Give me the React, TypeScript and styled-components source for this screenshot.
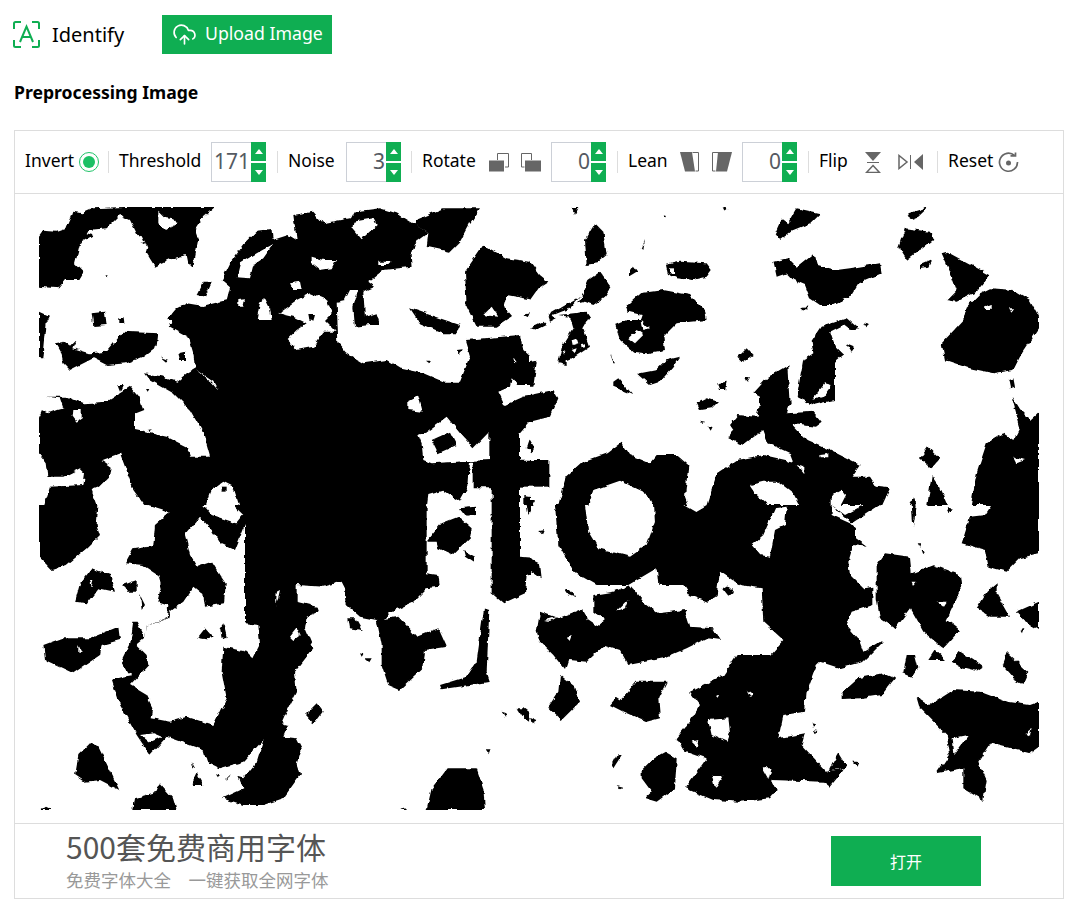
import styled, { createGlobalStyle } from "styled-components";
import { CloudUpload } from "lucide-react";

const GREEN = "#0fae52";
const ICON = "#666";

// the thresholded picture, traced per quadrant in 3x crop coordinates
type Quadrant = {
  x: number;
  y: number;
  black: string[];
  white: string[];
  top: string[];
};

const quadrants: Quadrant[] = [
  {
    x: 30,
    y: 200,
    black: [
      "27,110 40,92 80,95 110,85 125,50 130,35 155,40 190,25 280,21 555,21 520,50 495,90 505,120 495,170 490,205 475,190 470,165 430,175 375,200 350,160 355,140 330,125 320,100 300,60 270,45 250,65 230,85 175,90 170,100 190,105 150,130 135,190 160,215 145,240 105,240 85,265 27,260",
      "415,355 440,325 470,310 520,318 590,300 600,262 575,240 600,190 640,135 680,95 725,90 728,120 775,105 800,120 790,45 850,35 880,70 960,55 970,35 1050,25 1100,40 1150,70 1195,100 1155,130 1145,165 1148,200 1060,210 1015,245 1035,260 1000,275 1005,350 1040,340 1050,375 1020,375 975,380 970,320 985,270 960,270 945,300 920,305 925,430 950,460 1000,490 1070,480 1110,505 1180,520 1240,545 1290,545 1320,470 1305,420 1470,405 1480,450 1525,490 1515,545 1560,570 1560,925 350,925 310,870 285,800 270,760 215,780 245,800 240,830 210,860 185,870 205,925 40,925 60,860 160,855 165,820 150,805 100,830 55,830 50,790 27,760 27,650 40,620 50,590 110,590 160,610 230,605 300,560 325,590 340,630 315,640 315,690 410,710 470,740 480,770 540,770 520,700 480,630 430,580 360,540 345,520 400,530 440,545 470,520 495,505 490,460 475,410 420,380",
      "1155,60 1240,25 1350,25 1320,70 1290,125 1260,155 1190,140 1195,100 1155,75",
      "1305,215 1360,135 1430,175 1500,185 1560,245 1520,270 1510,300 1430,285 1420,320 1445,350 1400,380 1340,380 1310,320",
      "1140,325 1200,345 1290,375 1280,400 1240,400 1170,370",
      "500,285 520,245 545,245 525,290",
      "27,335 60,350 50,370 45,420 40,475 27,475",
      "185,340 225,335 230,375 190,378",
      "268,355 278,352 280,372 268,372",
      "75,430 100,425 120,440 140,420 130,445 180,460 230,455 280,395 385,400 380,440 340,470 290,490 230,495 190,475 120,510 100,490 95,465",
      "390,470 415,480 410,487",
      "445,460 465,455 465,480 450,480",
      "262,555 280,555 270,575",
      "345,570 355,570 350,578",
      "1480,345 1500,340 1495,352",
      "1500,385 1550,365 1530,390",
      "1280,450 1298,448 1290,465",
      "1185,482 1200,482 1195,490",
      "226,226 236,226 232,232",
    ],
    white: [
      "385,35 400,50 430,55 440,70 405,90 385,70",
      "320,115 335,108 345,130 325,125",
      "620,232 630,190 680,160 730,132 700,175 670,195 660,235",
      "845,170 880,180 918,180 905,205 870,210 845,190",
      "970,65 1030,55 1040,75 995,118 968,85",
      "780,250 810,245 815,270 790,270",
      "690,305 705,295 720,325 725,360 680,360",
      "625,300 645,298 640,320 625,320",
      "745,340 800,300 840,280 890,300 905,340 885,360 920,395 880,395 850,440 800,450 770,420 800,390 830,370 790,350",
      "1045,185 1085,185 1075,195 1045,195",
      "1135,600 1165,585 1178,635 1135,630",
      "1165,705 1190,695 1250,650 1290,700 1330,745 1378,695 1378,780 1330,782 1205,790 1180,780 1175,730",
      "1320,785 1328,785 1328,862 1385,862 1385,925 1190,925 1195,885 1240,872 1290,905 1315,860",
      "1470,700 1500,665 1560,660 1560,782 1470,782",
      "1470,860 1560,860 1560,925 1470,925",
      "1405,575 1440,560 1445,535 1465,555 1510,555 1560,568 1560,578 1480,590 1425,615",
      "525,925 545,870 580,845 610,860 630,925",
      "495,508 550,545 565,572 545,548",
      "35,605 50,590 90,595 100,625 80,630 55,640 35,630",
      "130,630 155,630 155,655 140,665 128,650",
      "1360,345 1385,320 1405,350",
      "1450,475 1460,490 1452,488",
      "415,360 428,360 425,372 417,372",
    ],
    top: [
      "835,345 855,345 850,362 838,362",
      "1205,720 1260,695 1280,735 1225,760",
      "1490,745 1500,715 1520,730 1510,750",
      "1480,885 1510,890 1500,920 1480,920",
      "575,860 590,860 590,875 575,875",
      "722,145 738,138 735,155 722,160",
      "352,690 365,688 360,696",
    ],
  },
  {
    x: 530,
    y: 200,
    black: [
      "0,185 30,225 55,245 25,265 0,300",
      "195,70 220,95 230,165 200,190 170,195 165,120",
      "125,21 145,21 135,45",
      "335,145 345,120 340,150",
      "300,210 310,195 325,215 300,230",
      "398,45 408,48 404,55",
      "578,21 595,28 585,36",
      "405,195 450,185 530,190 545,210 530,230 490,240 440,235 410,220",
      "145,310 175,240 210,215 245,260 225,290 190,315 165,305",
      "150,290 120,325 70,345 55,345",
      "0,385 40,365 50,375 20,390",
      "55,350 70,345 80,355 60,365",
      "85,345 170,335 180,350 160,385 180,440 135,470 110,480 110,495 85,490 95,440 130,385 120,350",
      "290,315 330,280 400,270 480,285 525,330 530,360 440,370 400,410 405,450 350,460 310,455 270,420 255,375 290,360 330,360 335,345 295,335",
      "240,465 255,490 250,490",
      "330,520 380,510 410,480 450,470 430,500 390,545 360,555 325,525",
      "250,545 265,535 310,585 250,560",
      "0,490 20,485 10,560 0,560",
      "0,585 70,570 85,595 60,650 0,665",
      "625,470 650,445 668,465 640,485",
      "565,550 590,545 585,570 570,570",
      "645,530 660,532 652,545",
      "500,610 530,595 565,605 545,625 510,630",
      "735,100 755,55 775,70 800,25 870,40 840,70 790,90 750,120",
      "730,185 775,175 800,200 850,160 860,195 920,210 960,205 1050,190 1055,220 985,250 960,290 910,315 870,315 840,295 825,255 790,240 770,220 740,230",
      "815,320 835,320 835,328 815,328",
      "1135,40 1195,21 1165,50 1140,60",
      "1125,85 1200,95 1210,120 1130,180 1105,140",
      "1170,195 1205,180 1195,200 1170,205",
      "1235,160 1250,155 1380,225 1340,275 1280,305 1250,300 1280,270 1260,215",
      "1310,320 1350,280 1380,265 1450,270 1500,300 1527,350 1527,385 1470,470 1450,510 1390,520 1320,505 1245,480 1235,430 1300,360",
      "1435,540 1450,535 1455,560 1440,565",
      "1000,370 1020,375 1010,385",
      "875,380 950,355 985,385 960,390 940,375 900,395 915,440 940,465 915,485 915,600 850,615 800,590 820,480 850,460 845,425",
      "950,430 975,440 965,455",
      "595,715 610,690 600,675 625,645 680,650 690,590 670,580 715,530 775,495 782,610 770,640 850,635 875,665 855,680 785,672 830,720 900,750 990,795 965,830 1020,830 1040,860 1080,865 1050,930 525,930 560,820 620,780 700,765 790,785 780,760 715,730 700,690 640,735",
      "80,930 110,830 160,785 230,760 275,725 300,765 360,790 380,765 440,765 475,795 465,890 480,930",
      "0,780 58,780 58,860 0,860",
      "0,715 15,740 5,760 0,755",
      "0,900 15,900 0,925",
      "1320,930 1340,820 1370,730 1420,700 1450,720 1470,680 1445,590 1470,630 1500,660 1527,635 1527,930",
      "1170,775 1195,740 1230,775 1205,805",
      "1190,930 1205,825 1230,860 1260,930",
      "1135,930 1150,885 1165,930",
      "510,665 525,668 518,675",
      "535,680 548,680 542,692",
    ],
    white: [
      "170,930 190,870 270,842 350,880 375,930",
      "660,855 700,845 745,845 790,880 815,930 730,930 680,885",
      "800,795 820,800 820,820",
      "870,765 895,762 895,772 872,772",
      "905,885 935,868 948,885 925,930 905,930",
      "845,600 885,550 905,555 880,590",
      "295,415 320,390 340,405 315,430",
      "335,360 360,385 340,390",
      "420,205 432,205 432,220 420,220",
      "125,420 140,415 145,430 128,435",
      "150,432 165,430 165,442 152,445",
      "125,450 140,445 135,460",
      "95,455 108,450 100,465",
      "1360,320 1385,310 1385,330 1370,330",
      "1450,770 1485,780 1460,790",
      "1440,325 1452,325 1448,335",
    ],
    top: [],
  },
  {
    x: 30,
    y: 505,
    black: [
      "27,0 205,0 200,60 210,90 170,130 110,180 65,195 27,155",
      "355,0 420,20 375,60 370,120 310,130 285,175 340,180 385,210 395,250 385,290 415,300 410,340 350,365 345,400 320,350 310,350 300,420 275,470 295,505 310,510 280,515 245,525 270,600 320,690 360,750 410,695 520,735 530,770 570,790 640,770 700,705 680,770 640,820 625,815 640,850 575,880 640,900 700,900 760,880 810,810 800,780 815,730 800,700 760,695 775,660 755,655 775,610 800,560 795,500 850,430 825,370 830,335 865,320 860,305 800,290 800,240 880,245 935,230 945,250 950,300 990,335 1040,345 1060,345 1080,320 1150,290 1190,250 1230,245 1225,210 1190,205 1190,0",
      "135,290 150,235 185,190 240,210 255,260 205,250 170,295",
      "280,240 320,225 320,260 290,260",
      "330,270 345,300 335,315",
      "40,420 95,400 180,400 265,365 270,405 215,420 210,450 130,505 45,465",
      "135,810 145,750 180,715 205,725 268,855 210,825 165,830",
      "310,915 315,880 380,860 390,835 430,880 440,915",
      "30,915 45,905 65,915",
      "1190,915 1205,850 1250,790 1340,790 1360,850 1365,915",
      "1385,0 1470,0 1470,155 1530,160 1535,190 1490,210 1485,265 1420,295 1385,265",
      "1190,110 1235,55 1285,35 1325,70 1320,100 1270,150 1225,130 1220,110",
      "1290,10 1335,5 1335,30 1310,35",
      "1300,135 1335,155 1335,175 1305,155",
      "1040,345 1105,335 1160,395 1225,370 1250,425 1185,435 1180,490 1110,555 1075,540 1055,480 1055,420",
      "955,340 975,340 995,375 960,370",
      "1230,540 1310,515 1340,470 1362,310 1378,315 1370,500 1380,530 1320,540 1235,553",
      "1415,620 1430,625 1425,635",
      "1460,610 1480,610 1520,640 1505,655 1480,640",
      "825,630 860,595 878,620 850,658",
      "1005,460 1025,460 1018,472",
      "990,445 1000,448 995,455",
      "1370,730 1385,730 1380,745",
      "1525,320 1560,315 1560,450 1520,380",
      "1525,78 1540,75 1535,88",
      "1490,0 1510,0 1495,30",
      "1110,915 1130,910 1132,915",
    ],
    white: [
      "465,90 510,35 545,75 570,115 615,135 645,60 645,355 685,360 690,420 670,460 650,440 580,425 575,500 590,580 550,660 470,635 420,650 365,640 370,610 350,570 300,540 355,480 350,450 320,420 345,400 350,365 415,340 420,320 460,290 490,245 520,270 525,305 585,295 590,240 570,210 545,170 500,185 480,150",
      "740,260 750,255 738,305",
      "780,395 800,370 810,390 790,405",
      "330,690 370,685 395,695 360,712",
      "180,225 190,225 185,245",
      "145,420 155,440 145,440",
      "520,0 610,0 640,30 620,55 545,30",
    ],
    top: [
      "505,395 525,370 548,395 530,400",
      "570,370 580,355 590,395 575,400",
      "485,770 495,790 490,790",
      "485,835 500,805 520,840 490,840",
      "555,805 570,810 560,820",
      "590,820 600,810 590,825",
    ],
  },
  {
    x: 530,
    y: 505,
    black: [
      "75,0 85,120 130,200 200,240 295,240 380,190 385,240 460,240 480,270 530,290 560,270 570,200 630,240 695,250 700,350 760,405 720,450 620,450 580,510 480,560 510,600 480,650 440,700 460,735 530,760 490,815 465,850 550,885 630,890 720,880 740,855 725,825 880,830 900,845 945,790 890,800 815,720 825,685 745,700 760,630 825,620 830,560 860,480 870,470 930,490 1000,470 1060,410 1060,405 1000,440 985,400 950,360 965,320 1030,300 1030,245 1000,250 960,210 955,170 970,120 1010,125 975,100 975,70 960,55 905,30 905,0",
      "300,240 340,290 385,325 465,315 480,365 550,370 570,405 530,400 470,430 400,460 295,480 270,435 225,420 170,470 115,465 105,495 70,450 30,410 20,380 30,320 85,340 160,310 170,345 200,365 225,345 190,320 190,270 250,260",
      "0,160 30,175 35,220 0,195",
      "105,255 120,255 140,280 115,270",
      "90,510 135,545 150,590 95,645 55,605 85,560",
      "0,635 22,645 5,655",
      "240,600 260,575 275,585 320,530 410,530 385,580 390,640 350,650 280,620",
      "1040,180 1065,145 1140,155 1145,205 1210,180 1290,210 1295,250 1250,345 1290,375 1240,430 1180,380 1140,310 1095,370 1050,340 1040,280",
      "935,565 985,520 1060,505 1095,520 1055,570 990,580 935,582",
      "1120,505 1130,450 1155,450 1165,490 1145,515",
      "1195,465 1215,435 1248,465",
      "1265,470 1285,438 1330,465 1358,485 1340,497 1290,485",
      "1415,480 1430,440 1495,500 1480,535 1450,520",
      "1340,310 1370,260 1400,235 1400,265 1440,335 1380,335",
      "1460,320 1527,290 1527,375 1480,345",
      "1160,575 1200,600 1270,555 1350,560 1430,590 1500,600 1527,590 1527,725 1500,745 1380,715 1345,770 1370,825 1360,885 1300,850 1300,790 1220,805 1260,745 1250,690 1170,610",
      "1300,100 1320,35 1365,30 1385,0 1527,0 1527,145 1470,160 1430,200 1375,185 1365,135 1295,115",
      "1145,0 1160,0 1150,65",
      "245,780 260,750 275,750 250,790",
      "260,840 280,845 270,850",
      "335,795 370,760 405,740 440,760 435,850 380,890 345,880 365,860 335,820",
      "910,770 925,745 950,785 895,800",
      "970,770 985,770 980,785",
      "905,0 945,30 1000,0 1050,0 965,55",
      "1160,115 1172,115 1168,128",
      "1175,135 1188,135 1180,148",
      "575,250 590,240 612,260 595,275",
      "25,75 42,72 35,88",
      "845,655 855,658 850,668",
      "850,675 862,678 855,688",
      "1470,375 1480,372 1476,385",
      "1250,10 1268,10 1258,25",
    ],
    white: [
      "165,0 175,80 205,130 300,155 350,120 375,50 372,0",
      "460,0 530,0 495,20",
      "665,120 700,90 735,10 770,5 765,60 735,75 720,155 690,150",
      "555,570 565,565 560,575",
      "650,555 670,570 660,572",
      "535,645 595,640 600,680 590,710 545,690",
      "485,710 505,705 500,725",
      "545,810 580,810 555,850",
      "695,790 725,790 715,825",
      "1145,230 1160,230 1150,242",
      "1220,290 1250,290 1240,305",
      "1265,700 1315,690 1270,750",
      "1490,690 1505,665 1500,695",
      "260,320 295,285 285,310",
      "110,395 125,390 120,405",
      "45,345 80,335 60,348",
    ],
    top: [],
  },
];

const clipOf = (i: number) => `quadrant-${i}`;

const ThresholdPicture = () => (
  <svg width="1000" height="603" viewBox="39 207 1000 603" style={{ display: "block" }}>
    <defs>
      <filter id="rough" filterUnits="userSpaceOnUse" x="39" y="207" width="1000" height="603">
        <feTurbulence type="fractalNoise" baseFrequency="0.14" numOctaves="2" seed="4" />
        <feDisplacementMap in="SourceGraphic" scale="5" xChannelSelector="R" yChannelSelector="G" />
      </filter>
      {quadrants.map((q, i) => (
        <clipPath id={clipOf(i)} key={i}>
          <rect x={q.x === 30 ? 39 : 530} y={q.y === 200 ? 207 : 505} width={q.x === 30 ? 491 : 509} height={q.y === 200 ? 298 : 305} />
        </clipPath>
      ))}
    </defs>
    <g filter="url(#rough)">
      <rect x="30" y="200" width="1020" height="620" fill="#fff" />
      {quadrants.map((q, i) => (
        <g clipPath={`url(#${clipOf(i)})`} key={i}>
          <g transform={`translate(${q.x} ${q.y}) scale(0.33333)`}>
            {q.black.map((p, j) => (
              <polygon key={j} points={p} fill="#000" />
            ))}
            {q.white.map((p, j) => (
              <polygon key={j} points={p} fill="#fff" />
            ))}
            {q.top.map((p, j) => (
              <polygon key={j} points={p} fill="#000" />
            ))}
          </g>
        </g>
      ))}
    </g>
  </svg>
);

const IdentifyIcon = () => (
  <svg width="27" height="27" viewBox="0 0 27 27" fill="none" stroke={GREEN} strokeWidth="2">
    <path d="M1 8V2.500A1.500 1.500 0 0 1 2.500 1H8M19 1h5.500A1.500 1.500 0 0 1 26 2.500V8M26 19v5.500a1.500 1.500 0 0 1-1.500 1.500H19M8 26H2.500A1.500 1.500 0 0 1 1 24.500V19" />
    <path d="M7 21 13.500 5.500 20 21M9 16h9" strokeWidth="2" />
  </svg>
);

const RotateLeftIcon = () => (
  <svg width="20" height="20" viewBox="0 0 20 20" fill="none" stroke={ICON}>
    <rect x="0" y="8.500" width="15" height="11" fill={ICON} stroke="none" />
    <path d="M8.500 8V1.500H19.500V15H16" />
  </svg>
);

const RotateRightIcon = () => (
  <svg width="20" height="20" viewBox="0 0 20 20" fill="none" stroke={ICON}>
    <rect x="4" y="8.500" width="16" height="11" fill={ICON} stroke="none" />
    <path d="M10.500 8V1.500H.5V15H3.500" />
  </svg>
);

const LeanLeftIcon = () => (
  <svg width="20" height="20" viewBox="0 0 20 20" fill="none" stroke={ICON}>
    <polygon points="0,0 12,0 15,19.500 5,19.500" fill={ICON} stroke="none" />
    <path d="M12.500 .5H18.500V19H15.500" />
  </svg>
);

const LeanRightIcon = () => (
  <svg width="20" height="20" viewBox="0 0 20 20" fill="none" stroke={ICON}>
    <polygon points="6,0 20,0 15,19.500 4,19.500" fill={ICON} stroke="none" />
    <path d="M6 .5H.5V19H3.500" />
  </svg>
);

const FlipVerticalIcon = () => (
  <svg width="16" height="21" viewBox="0 0 16 21" fill="none" stroke={ICON}>
    <polygon points="0,0 16,0 8,9" fill={ICON} stroke="none" />
    <path d="M2 10.500H14" />
    <polygon points="8,13.500 14.500,20.500 1.500,20.500" strokeWidth="1.500" />
  </svg>
);

const FlipHorizontalIcon = () => (
  <svg width="25" height="16" viewBox="0 0 25 16" fill="none" stroke={ICON}>
    <polygon points="1,1.500 1,14.500 9,8" strokeWidth="1.500" />
    <path d="M12.500 1V15" />
    <polygon points="25,0 25,16 16,8" fill={ICON} stroke="none" />
  </svg>
);

const ResetIcon = () => (
  <svg width="21" height="21" viewBox="0 0 21 21" fill="none" stroke={ICON} strokeWidth="1.700">
    <path d="M16.500 3.500A9 9 0 1 0 19.500 10" />
    <path d="M12.500 3.800H17.500V.5" />
    <circle cx="10.500" cy="11" r="2.500" fill={ICON} stroke="none" />
  </svg>
);

const GlobalStyle = createGlobalStyle`
  html, body {
    margin: 0;
    background: #fff;
    font-family: "Noto Sans", "Noto Sans CJK SC", sans-serif;
    color: #000;
  }
`;

const Spinner = ({ value }: { value: number }) => (
  <S.Spinner>
    <S.SpinnerValue>{value}</S.SpinnerValue>
    <S.SpinnerButtons>
      <S.SpinnerButton $dir="up" />
      <S.SpinnerButton $dir="down" />
    </S.SpinnerButtons>
  </S.Spinner>
);

export default function App() {
  return (
    <S.Page>
      <GlobalStyle />
      <S.Header>
        <S.Identify>
          <IdentifyIcon />
          <S.IdentifyText>Identify</S.IdentifyText>
        </S.Identify>
        <S.UploadButton>
          <CloudUpload size={25} strokeWidth={1.6} />
          <S.UploadText>Upload Image</S.UploadText>
        </S.UploadButton>
      </S.Header>
      <S.Title>Preprocessing Image</S.Title>
      <S.Panel>
        <S.Toolbar>
          <S.Group $gap={6} $end={-2}>
            <S.Label $w={48}>Invert</S.Label>
            <S.Radio />
          </S.Group>
          <S.Separator />
          <S.Group $gap={10}>
            <S.Label $w={82}>Threshold</S.Label>
            <Spinner value={171} />
          </S.Group>
          <S.Separator />
          <S.Group $gap={10} $end={-1}>
            <S.Label $w={48}>Noise</S.Label>
            <Spinner value={3} />
          </S.Group>
          <S.Separator />
          <S.Group $gap={12}>
            <S.Label $w={55}>Rotate</S.Label>
            <RotateLeftIcon />
            <RotateRightIcon />
            <S.SpinnerSlot>
              <Spinner value={0} />
            </S.SpinnerSlot>
          </S.Group>
          <S.Separator />
          <S.Group $gap={12}>
            <S.Label $w={40}>Lean</S.Label>
            <LeanLeftIcon />
            <LeanRightIcon />
            <S.SpinnerSlot>
              <Spinner value={0} />
            </S.SpinnerSlot>
          </S.Group>
          <S.Separator />
          <S.Group $gap={17} $end={3}>
            <S.Label $w={29}>Flip</S.Label>
            <FlipVerticalIcon />
            <FlipHorizontalIcon />
          </S.Group>
          <S.Separator />
          <S.Group $gap={5}>
            <S.Label $w={45}>Reset</S.Label>
            <ResetIcon />
          </S.Group>
        </S.Toolbar>
        <S.Picture>
          <ThresholdPicture />
        </S.Picture>
        <S.Ad>
          <S.AdText>
            <S.AdTitle>500套免费商用字体</S.AdTitle>
            <S.AdSub>免费字体大全　一键获取全网字体</S.AdSub>
          </S.AdText>
          <S.AdButton>打开</S.AdButton>
        </S.Ad>
      </S.Panel>
    </S.Page>
  );
}

const S = {
  Page: styled.div`
    width: 1074px;
    height: 909px;
    padding: 15px 10px 0 14px;
    box-sizing: border-box;
    overflow: hidden;
  `,
  //
  Header: styled.div`
    display: flex;
    align-items: center;
    height: 39px;
  `,
  Identify: styled.div`
    display: flex;
    align-items: center;
    width: 148px;
    margin-left: -1px;
    margin-right: 1px;
  `,
  IdentifyText: styled.span`
    margin-left: 12px;
    font-size: 20px;
  `,
  UploadButton: styled.div`
    display: flex;
    align-items: center;
    gap: 8px;
    width: 170px;
    height: 39px;
    padding-left: 10px;
    box-sizing: border-box;
    background-color: ${GREEN};
    color: #fff;
  `,
  UploadText: styled.span`
    font-size: 17.700px;
    padding-bottom: 4px;
    white-space: nowrap;
  `,
  //
  Title: styled.div`
    margin-top: 25px;
    height: 51px;
    font-size: 17.600px;
    font-weight: 700;
    line-height: 26px;
  `,
  //
  Panel: styled.div`
    width: 1050px;
    height: 769px;
    box-sizing: border-box;
    border: 1px solid #ddd;
    display: flex;
    flex-direction: column;
  `,
  Toolbar: styled.div`
    display: flex;
    align-items: center;
    height: 62px;
    padding-left: 10px;
    border-bottom: 1px solid #ddd;
  `,
  Group: styled.div<{ $gap: number; $end?: number }>`
    display: flex;
    align-items: center;
    gap: ${(p) => p.$gap}px;
    margin-right: ${(p) => p.$end ?? 0}px;
  `,
  Label: styled.span<{ $w: number }>`
    width: ${(p) => p.$w}px;
    padding-bottom: 4px;
    font-size: 17.500px;
    white-space: nowrap;
  `,
  Radio: styled.span`
    display: flex;
    align-items: center;
    justify-content: center;
    width: 20px;
    height: 20px;
    box-sizing: border-box;
    border: 1.500px solid #22c46a;
    border-radius: 50%;
    &::after {
      content: "";
      width: 12px;
      height: 12px;
      border-radius: 50%;
      background-color: #1cc065;
    }
  `,
  Separator: styled.span`
    width: 1px;
    height: 22px;
    margin: 0 10px 0 11px;
    background-color: #ddd;
  `,
  //
  SpinnerSlot: styled.div`
    margin-left: -2px;
  `,
  Spinner: styled.div`
    display: flex;
    width: 55px;
    height: 40px;
    box-sizing: border-box;
    border: 1px solid #ccd0d7;
    border-right: none;
  `,
  SpinnerValue: styled.span`
    flex: 1;
    padding-right: 1px;
    text-align: right;
    line-height: 36px;
    font-size: 21px;
    color: #555a62;
  `,
  SpinnerButtons: styled.div`
    display: flex;
    flex-direction: column;
    justify-content: space-between;
    width: 15px;
    margin: -1px 0;
  `,
  SpinnerButton: styled.span<{ $dir: "up" | "down" }>`
    display: flex;
    align-items: center;
    justify-content: center;
    height: 19px;
    background-color: ${GREEN};
    &::after {
      content: "";
      border-left: 4px solid transparent;
      border-right: 4px solid transparent;
      ${(p) =>
        p.$dir === "up"
          ? "border-bottom: 5px solid #fff;"
          : "border-top: 5px solid #fff;"}
    }
  `,
  //
  Picture: styled.div`
    height: 603px;
    padding: 13px 24px;
    border-bottom: 1px solid #ddd;
  `,
  //
  Ad: styled.div`
    flex: 1;
    display: flex;
    align-items: center;
    justify-content: space-between;
    padding: 0 82px 0 51px;
  `,
  AdText: styled.div`
    display: flex;
    flex-direction: column;
    gap: 6px;
    font-family: "Noto Sans CJK SC", sans-serif;
  `,
  AdTitle: styled.span`
    font-size: 30px;
    line-height: 32px;
    color: #555;
    white-space: nowrap;
  `,
  AdSub: styled.span`
    font-size: 17.500px;
    line-height: 24px;
    color: #999;
    white-space: nowrap;
  `,
  AdButton: styled.div`
    width: 150px;
    height: 50px;
    display: flex;
    align-items: center;
    justify-content: center;
    background-color: ${GREEN};
    color: #fff;
    font-family: "Noto Sans CJK SC", sans-serif;
    font-size: 16px;
  `,
};
